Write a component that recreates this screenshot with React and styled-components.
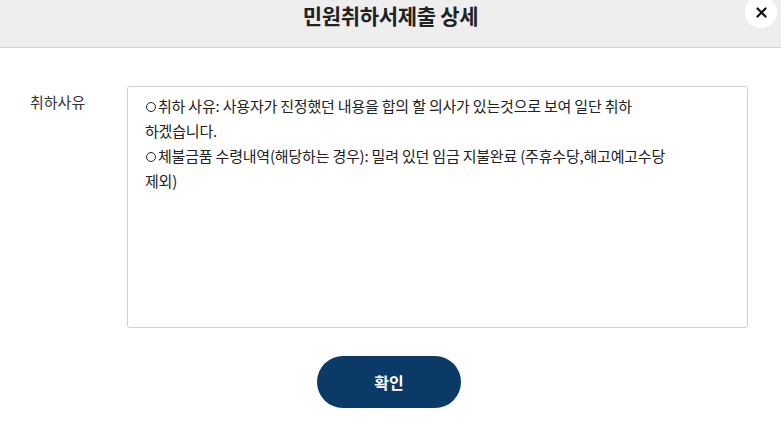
import React from 'react'
import styled, { createGlobalStyle } from 'styled-components'

const GlobalStyle = createGlobalStyle`
    html, body {
        margin: 0;
        padding: 0;
        background: #fff;
        font-family: "Noto Sans CJK KR", "Noto Sans", sans-serif;
        color: #222;
    }
`

const Modal = styled.div`
    width: 781px;
    height: 437px;
    overflow: hidden;
    background: #fff;
`

const Header = styled.header`
    position: relative;
    height: 47px;
    background: #eeeeee;
    border-bottom: 1px solid #d4d4d4;
    display: flex;
    justify-content: center;
`

const Title = styled.h2`
    margin: 0;
    padding-top: 1px;
    font-size: 21px;
    font-weight: 700;
    line-height: 28px;
    color: #222;
    letter-spacing: -0.3px;
`

const CloseButton = styled.button`
    position: absolute;
    top: -4px;
    right: 4px;
    width: 32px;
    height: 32px;
    border: 0;
    border-radius: 50%;
    background: #fff;
    display: flex;
    align-items: center;
    justify-content: center;
    padding: 0;
    cursor: pointer;
`

const Body = styled.section`
    padding: 38px 33px 0 30px;
`

const Row = styled.div`
    display: grid;
    grid-template-columns: 97px 1fr;
    align-items: start;
`

const Label = styled.div`
    padding-top: 6px;
    font-size: 15px;
    line-height: 20px;
    color: #333;
`

const TextBox = styled.div`
    height: 242px;
    box-sizing: border-box;
    border: 1px solid #cfcfcf;
    border-radius: 3px;
    padding: 6px 17px;
    font-size: 15px;
    line-height: 25px;
    color: #222;
`

const Line = styled.div`
    white-space: nowrap;
    letter-spacing: -0.2px;
`

const Bullet = styled.span`
    display: inline-block;
    width: 10px;
    height: 10px;
    margin: 0 2px 1px 1px;
    border: 1.3px solid #222;
    border-radius: 50%;
    box-sizing: border-box;
    vertical-align: middle;
`

const Footer = styled.div`
    display: flex;
    justify-content: center;
    padding-top: 28px;
`

const ConfirmButton = styled.button`
    width: 144px;
    height: 52px;
    border: 0;
    border-radius: 26px;
    background: #0c3a66;
    color: #fff;
    font-family: inherit;
    font-size: 16px;
    font-weight: 700;
    cursor: pointer;
`

const lines = [
    { bullet: true, text: '취하 사유: 사용자가 진정했던 내용을 합의 할 의사가 있는것으로 보여 일단 취하' },
    { text: '하겠습니다.' },
    { bullet: true, text: '체불금품 수령내역(해당하는 경우): 밀려 있던 임금 지불완료 (주휴수당,해고예고수당' },
    { text: '제외)' },
]

function App() {
    return (
        <>
            <GlobalStyle />
            <Modal>
                <Header>
                    <Title>민원취하서제출 상세</Title>
                    <CloseButton aria-label="닫기">
                        <svg width="11" height="11" viewBox="0 0 11 11">
                            <path d="M1.5 1.5 L9.5 9.5 M9.5 1.5 L1.5 9.5" stroke="#111" strokeWidth="2.2" strokeLinecap="round" />
                        </svg>
                    </CloseButton>
                </Header>
                <Body>
                    <Row>
                        <Label>취하사유</Label>
                        <TextBox>
                            {lines.map((l, i) => (
                                <Line key={i}>
                                    {l.bullet && <Bullet />}
                                    {l.text}
                                </Line>
                            ))}
                        </TextBox>
                    </Row>
                    <Footer>
                        <ConfirmButton>확인</ConfirmButton>
                    </Footer>
                </Body>
            </Modal>
        </>
    )
}

export default App
